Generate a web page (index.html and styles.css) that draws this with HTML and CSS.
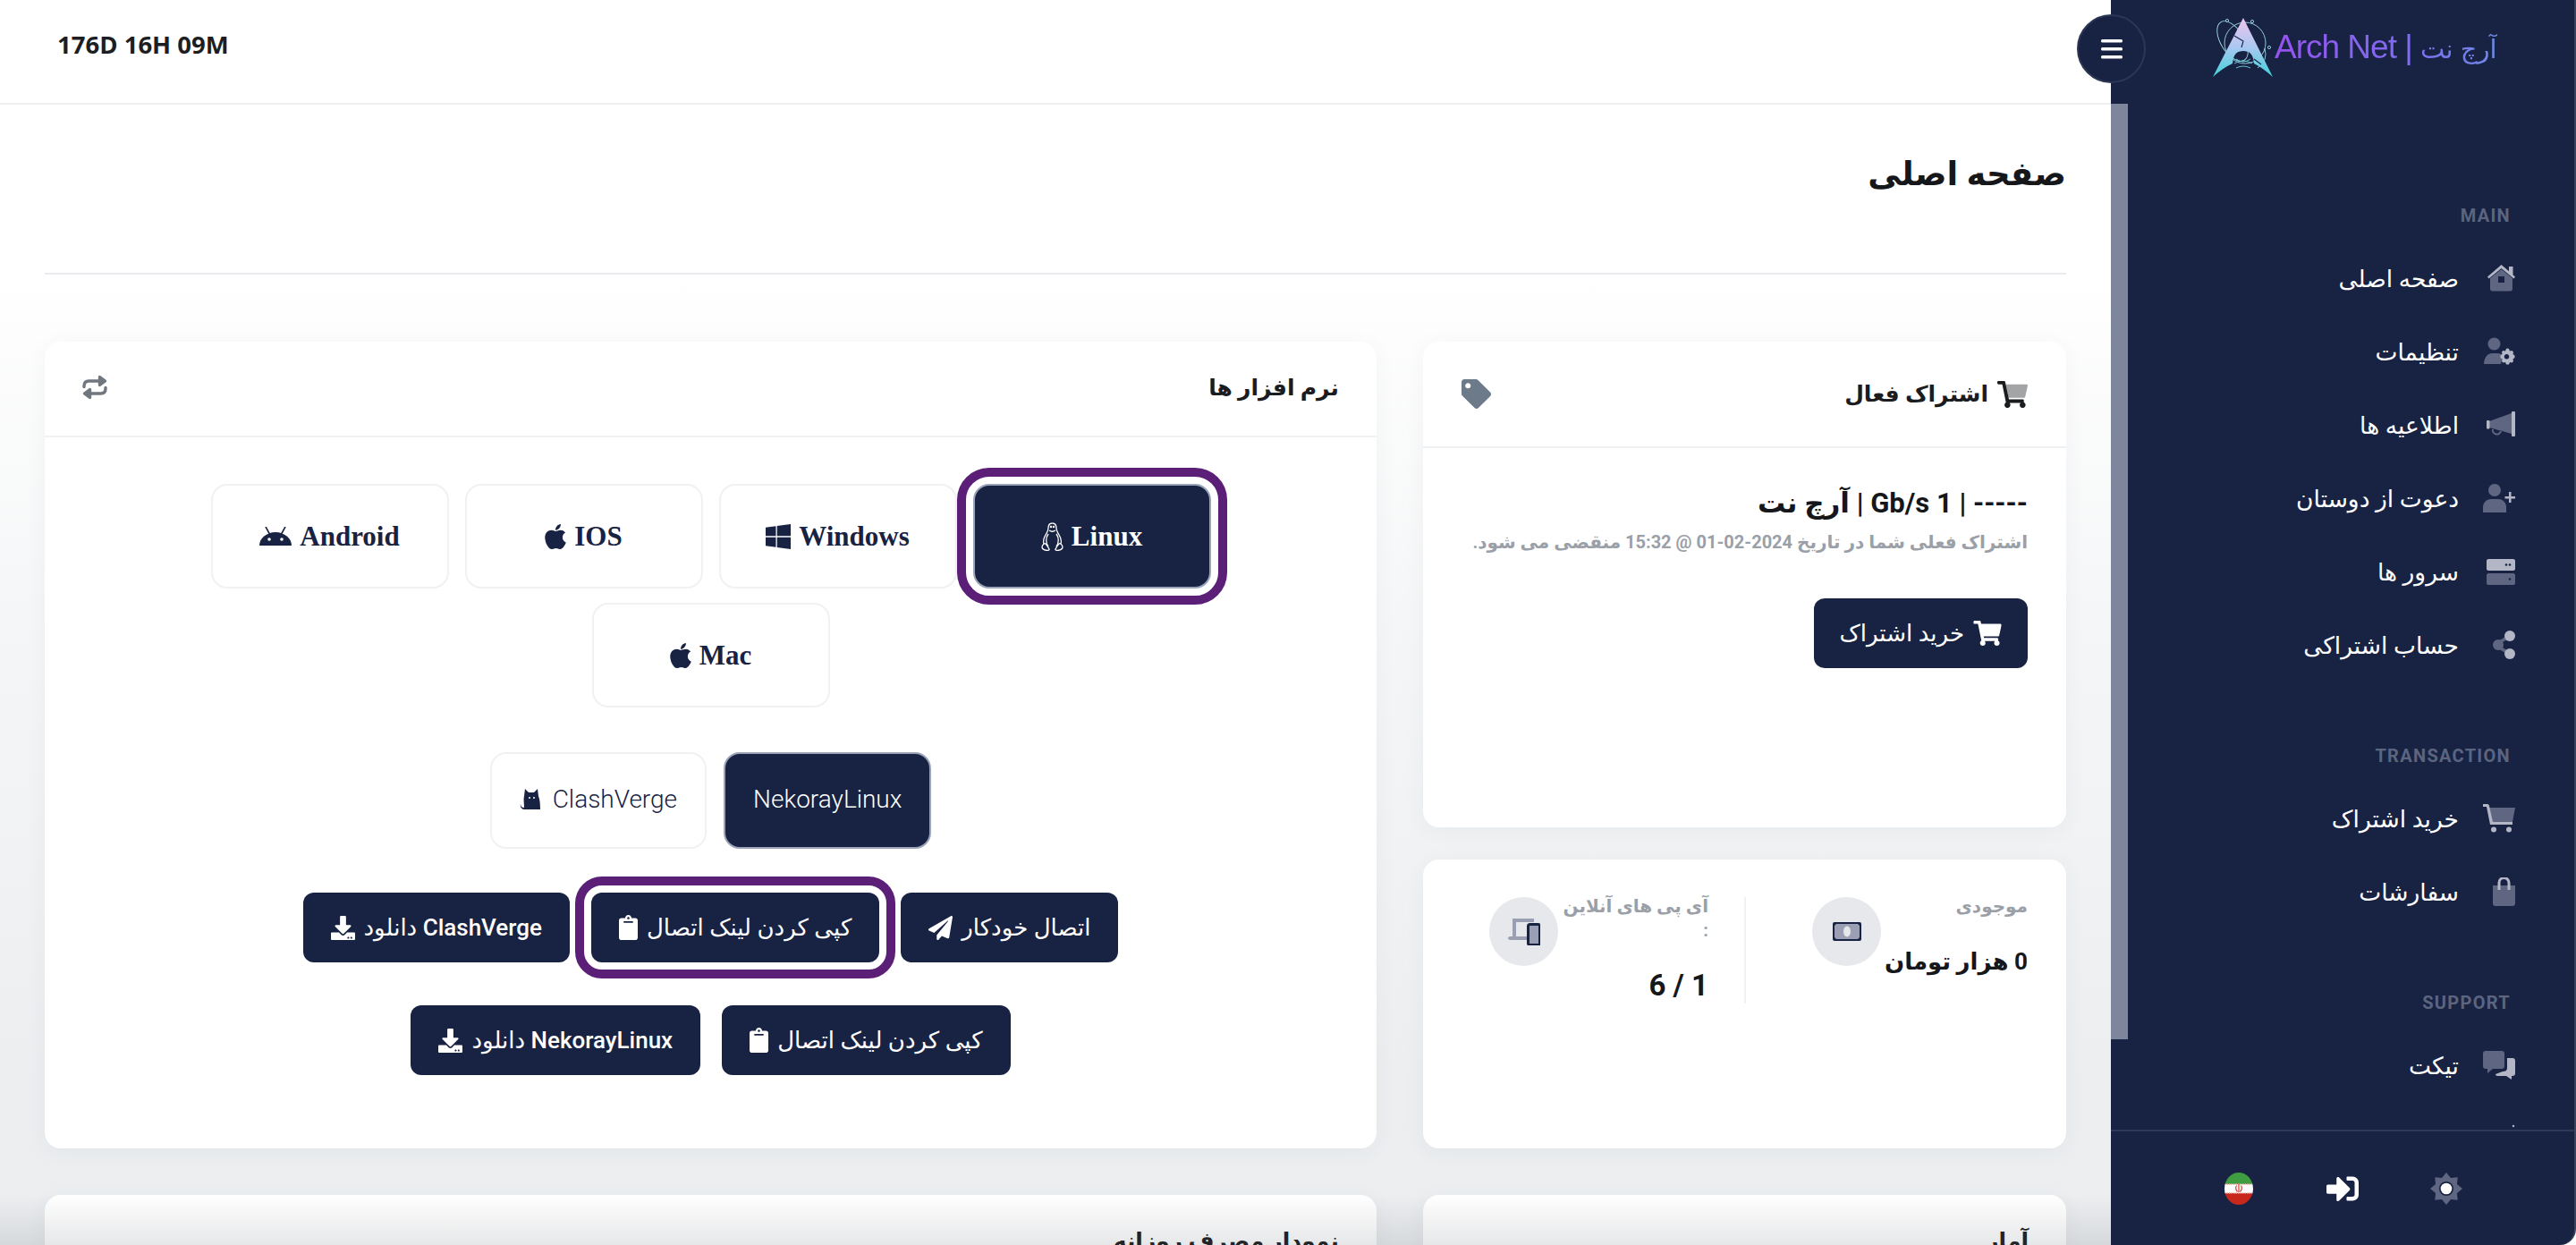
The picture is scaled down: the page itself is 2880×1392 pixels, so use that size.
FILE: index.html
```html
<!DOCTYPE html>
<html lang="fa" dir="rtl">
<head>
  <meta charset="UTF-8">
  <title>Arch Net</title>
  <link rel="stylesheet" href="styles.css">
</head>
<body>
  <svg class="sprite" aria-hidden="true">
    <symbol id="i-cart" viewBox="0 0 576 512"><path d="M528.12 301.319l47.273-208C578.806 78.301 567.391 64 551.99 64H159.208l-9.166-44.81C147.758 8.021 137.93 0 126.529 0H24C10.745 0 0 10.745 0 24v16c0 13.255 10.745 24 24 24h69.883l70.248 343.435C147.325 417.1 136 435.222 136 456c0 30.928 25.072 56 56 56s56-25.072 56-56c0-15.674-6.447-29.835-16.824-40h209.647C430.447 426.165 424 440.326 424 456c0 30.928 25.072 56 56 56s56-25.072 56-56c0-22.172-12.888-41.332-31.579-50.405l5.517-24.276c3.413-15.018-8.002-29.319-23.403-29.319H218.117l-6.545-32h293.145c11.206 0 20.92-7.754 23.403-18.681z"/></symbol>
    <symbol id="i-cart-duo" viewBox="0 0 576 512"><path class="duo-back" d="M159 64h393c15 0 27 14 23 29l-47 208c-3 11-12 19-24 19H212z"/><path d="M24 0h102c12 0 22 8 24 19l71 329h260c15 0 27 14 23 29l-3 29c19 9 35 28 35 50 0 31-25 56-56 56s-56-25-56-56c0-16 6-30 17-40H232c10 10 16 24 16 40 0 31-25 56-56 56s-56-25-56-56c0-21 11-39 28-49L94 64H24C11 64 0 53 0 40V24C0 11 11 0 24 0z"/></symbol>
    <symbol id="i-apple" viewBox="0 0 384 512"><path d="M318.7 268.7c-.2-36.7 16.4-64.4 50-84.8-18.8-26.9-47.2-41.7-84.7-44.6-35.5-2.8-74.3 20.7-88.5 20.7-15 0-49.4-19.7-76.4-19.7C63.3 141.2 4 184.8 4 273.5q0 39.3 14.4 81.2c12.8 36.7 59 126.7 107.2 125.2 25.2-.6 43-17.9 75.8-17.9 31.8 0 48.3 17.9 76.4 17.9 48.6-.7 90.4-82.5 102.6-119.3-65.2-30.7-61.7-90-61.7-91.9zm-56.6-164.2c27.3-32.4 24.8-61.9 24-72.5-24.1 1.4-52 16.4-67.9 34.9-17.5 19.8-27.8 44.3-25.6 71.9 26.1 2 49.9-11.4 69.5-34.3z"/></symbol>
    <symbol id="i-clip" viewBox="0 0 384 512"><path d="M384 112v352c0 26.51-21.49 48-48 48H48c-26.51 0-48-21.49-48-48V112c0-26.51 21.49-48 48-48h80c0-35.29 28.71-64 64-64s64 28.71 64 64h80c26.51 0 48 21.49 48 48zM192 40c-13.255 0-24 10.745-24 24s10.745 24 24 24 24-10.745 24-24-10.745-24-24-24m96 114v-20a6 6 0 0 0-6-6H102a6 6 0 0 0-6 6v20a6 6 0 0 0 6 6h180a6 6 0 0 0 6-6z"/></symbol>
    <symbol id="i-down" viewBox="0 0 512 512"><path d="M216 0h80c13.3 0 24 10.7 24 24v168h87.7c17.8 0 26.7 21.5 14.1 34.1L269.7 378.3c-7.5 7.5-19.8 7.5-27.3 0L90.1 226.1c-12.6-12.6-3.7-34.1 14.1-34.1H192V24c0-13.3 10.7-24 24-24zm296 376v112c0 13.3-10.7 24-24 24H24c-13.3 0-24-10.7-24-24V376c0-13.3 10.7-24 24-24h146.7l49 49c20.1 20.1 52.5 20.1 72.6 0l49-49H488c13.3 0 24 10.7 24 24zm-124 88c0-11-9-20-20-20s-20 9-20 20 9 20 20 20 20-9 20-20zm64 0c0-11-9-20-20-20s-20 9-20 20 9 20 20 20 20-9 20-20z"/></symbol>
  </svg>

  <div class="layout">
    <button class="menu-btn" aria-label="menu">
      <svg viewBox="0 0 24 22" width="24" height="22" fill="#fff"><rect width="24" height="3.600" rx="1.500"/><rect y="9" width="24" height="3.600" rx="1.500"/><rect y="18" width="24" height="3.600" rx="1.500"/></svg>
    </button>

    <aside class="sidebar">
      <div class="logo">
        <svg class="logo-mark" viewBox="0 0 67 66">
          <defs>
            <linearGradient id="archGrad" x1="0" y1="0" x2="0" y2="1">
              <stop offset="0" stop-color="#f0c4ec"/>
              <stop offset="0.5" stop-color="#a9c8f2"/>
              <stop offset="1" stop-color="#3fd2d6"/>
            </linearGradient>
          </defs>
          <g fill="none" stroke="#9fdbe6" stroke-width="0.9">
            <ellipse cx="22" cy="26" rx="13" ry="25" transform="rotate(-32 22 26)"/>
            <circle cx="36" cy="28" r="23"/>
            <path d="M58 34q4 14-8 22"/>
            <circle cx="16" cy="3" r="1.6"/>
            <circle cx="44" cy="4" r="1.6"/>
            <circle cx="63" cy="33" r="1.6"/>
          </g>
          <path fill="url(#archGrad)" d="M34 0L67 66Q56 56 46 51C45 40 41 37 34 37C27 37 23 40 22 51Q11 56 0 66Z"/>
          <path fill="none" stroke="#182343" stroke-width="1.1" d="M24 20l10 6-2 7M46 46l8 6"/>
          <g fill="none" stroke="#6fcfdc" stroke-width="0.9">
            <path d="M26 46q8 6 16 0M24 51q10-6 20 0M26 56q8-4 16 0"/>
          </g>
        </svg>
        <span class="logo-text" dir="ltr">Arch Net | <span class="logo-fa">آرچ نت</span></span>
      </div>

      <nav class="nav">
        <div class="nav-thumb"></div>
        <div class="nav-title">MAIN</div>
        <a class="nav-item">
          <svg class="nav-icon" viewBox="0 0 36 32"><path class="d1" d="M20.500 6L33 16v12c0 1.500-1 2.500-2.500 2.500h-20C9 30.500 8 29.500 8 28V16z"/><path class="d2" d="M5 14.500L20.500 1l8.500 7.300V3h4.500v9.200L36 14.500l-1.500 2L20.500 5 6.500 16.500z"/><rect class="hole" x="17" y="14" width="7" height="7"/></svg>
          <span>صفحه اصلی</span>
        </a>
        <a class="nav-item">
          <svg class="nav-icon" viewBox="0 0 36 32"><circle class="d1" cx="12.500" cy="7.500" r="7"/><path class="d1" d="M1 30c0-7 4-12 9-12h6c3 0 5 1 6 2l-2 10z"/><path class="d2" d="M27 12.500l2 .5 1 2.500 2.500-.5 1.500 1.500-.5 2.500 2 1.500v2.500l-2 1.500.5 2.500-1.500 1.500-2.500-.5-1 2.500h-3l-1-2.500-2.500.5-1.500-1.500.5-2.500-2-1.500V20.500l2-1.500-.5-2.500 1.500-1.500 2.500.5 1-2.500zM26.500 19a2.800 2.800 0 1 0 .001 0z" fill-rule="evenodd"/></svg>
          <span>تنظیمات</span>
        </a>
        <a class="nav-item">
          <svg class="nav-icon" viewBox="0 0 36 32"><path class="d1" d="M7 12L32 3v23L7 19z"/><rect class="d2" x="32" y="1" width="4" height="28" rx="1"/><rect class="d2" x="4" y="11" width="3.500" height="9.500" rx="1"/><path d="M11 21a4.500 4.500 0 0 0 9 2" fill="none" stroke="#5e6681" stroke-width="2"/></svg>
          <span>اطلاعیه ها</span>
        </a>
        <a class="nav-item">
          <svg class="nav-icon" viewBox="0 0 36 32"><circle class="d1" cx="13" cy="7" r="7"/><path class="d1" d="M0 32v-6c0-5 4-9 9-9h8c5 0 9 4 9 9v6z"/><path class="d2" d="M29 9h2.500v5H36v2.500h-4.500V21H29v-4.500h-4.500V14H29z"/></svg>
          <span>دعوت از دوستان</span>
        </a>
        <a class="nav-item">
          <svg class="nav-icon" viewBox="0 0 36 32"><path class="d2" d="M6 2h28c1 0 2 1 2 2v9c0 1-1 2-2 2H6c-1 0-2-1-2-2V4c0-1 1-2 2-2z"/><path class="d1" d="M6 18h28c1 0 2 1 2 2v9c0 1-1 2-2 2H6c-1 0-2-1-2-2v-9c0-1 1-2 2-2z"/><circle class="hole" cx="30" cy="8.500" r="1.300"/><circle class="hole" cx="26" cy="8.500" r="1.300"/><circle class="hole" cx="30" cy="24.500" r="1.300"/></svg>
          <span>سرور ها</span>
        </a>
        <a class="nav-item">
          <svg class="nav-icon" viewBox="0 0 36 32"><path class="d1" d="M15 13l13-8 2 3-13 8zM17 16l13 8-2 3-13-8z"/><circle class="d1" cx="17" cy="16" r="6"/><circle class="d2" cx="30" cy="6" r="6"/><circle class="d2" cx="30" cy="26" r="6"/></svg>
          <span>حساب اشتراکی</span>
        </a>

        <div class="nav-title">TRANSACTION</div>
        <a class="nav-item">
          <svg class="nav-icon" viewBox="0 0 36 32"><path class="d1" d="M7 4h29l-3 16H10z"/><path class="d2" d="M0 0h5c1 0 2 1 2 2l4 18h22v3H8L4 3H0z"/><circle class="d2" cx="12" cy="28.500" r="3"/><circle class="d2" cx="29" cy="28.500" r="3"/></svg>
          <span>خرید اشتراک</span>
        </a>
        <a class="nav-item">
          <svg class="nav-icon" viewBox="0 0 36 32"><path class="d1" d="M11 9h25v20c0 2-1 3-3 3H14c-2 0-3-1-3-3z"/><path class="d2-line" d="M18 14V6a5.500 5.500 0 0 1 11 0v8"/></svg>
          <span>سفارشات</span>
        </a>

        <div class="nav-title">SUPPORT</div>
        <a class="nav-item">
          <svg class="nav-icon" viewBox="0 0 36 32"><path class="d1" d="M3 0h18c2 0 3 1 3 3v14c0 2-1 3-3 3H11l-6 5v-5H3c-2 0-3-1-3-3V3c0-2 1-3 3-3z"/><path class="d2" d="M27 8h6c2 0 3 1 3 3v14c0 2-1 3-3 3h-1v4l-6-4h-10c-1 0-2-1-2-2l8-3c3 0 5-1 5-4z"/></svg>
          <span>تیکت</span>
        </a>
        <a class="nav-item">
          <svg class="nav-icon" viewBox="0 0 36 32"><circle class="d2" cx="34" cy="2" r="1.200"/><rect class="d1" x="6" y="7" width="30" height="25" rx="3"/></svg>
          <span>قوانین</span>
        </a>
      </nav>

      <div class="side-foot">
        <svg class="foot-icon" viewBox="-18 -18 36 36"><polygon class="d1" points="0,-18 5,-12 12.700,-12.700 12,-5 18,0 12,5 12.700,12.700 5,12 0,18 -5,12 -12.700,12.700 -12,5 -18,0 -12,-5 -12.700,-12.700 -5,-12"/><circle cx="0" cy="0" r="8" fill="#182343"/><circle cx="0" cy="0" r="6.300" fill="#fff"/></svg>
        <svg class="foot-icon" viewBox="0 0 512 512" fill="#fff"><path d="M416 448h-84c-6.600 0-12-5.400-12-12v-40c0-6.600 5.400-12 12-12h84c17.700 0 32-14.300 32-32V160c0-17.700-14.300-32-32-32h-84c-6.600 0-12-5.400-12-12V76c0-6.600 5.400-12 12-12h84c53 0 96 43 96 96v192c0 53-43 96-96 96zm-47-201L201 79c-15-15-41-4.500-41 17v96H24c-13.300 0-24 10.700-24 24v96c0 13.300 10.700 24 24 24h136v96c0 21.500 26 32 41 17l168-168c9.300-9.400 9.300-24.600 0-34z"/></svg>
        <svg class="foot-icon" viewBox="0 0 36 36">
          <defs><clipPath id="flagClip"><ellipse cx="18" cy="18" rx="16" ry="18"/></clipPath></defs>
          <g clip-path="url(#flagClip)">
            <rect width="36" height="13" fill="#3f9c41"/>
            <rect y="13" width="36" height="10" fill="#fff"/>
            <rect y="23" width="36" height="13" fill="#c8281c"/>
            <path d="M2 13h32M2 23h32" stroke="#e9a6a0" stroke-width="1.500" stroke-dasharray="1.500 1"/>
            <path d="M18 13v9M15.500 14.500q-2 3.500 1 7M20.500 14.500q2 3.500-1 7" fill="none" stroke="#d03a30" stroke-width="1.200"/>
          </g>
        </svg>
      </div>
    </aside>

    <main class="main">
      <header class="topbar"><div class="uptime" dir="ltr">176D 16H 09M</div></header>

      <div class="page-head"><h1>صفحه اصلی</h1></div>

      <div class="grid">
        <div class="col-side">
          <section class="card card-sub">
            <div class="card-head head-tall">
              <h3 class="card-title"><svg class="title-cart" viewBox="0 0 576 512"><use href="#i-cart-duo"/></svg> اشتراک فعال</h3>
              <svg class="tag" viewBox="0 0 512 512"><path d="M0 252.118V48C0 21.490 21.490 0 48 0h204.118a48 48 0 0 1 33.941 14.059l211.882 211.882c18.745 18.745 18.745 49.137 0 67.882L293.823 497.941c-18.745 18.745-49.137 18.745-67.882 0L14.059 286.059A48 48 0 0 1 0 252.118zM112 64c-26.510 0-48 21.490-48 48s21.490 48 48 48 48-21.490 48-48-21.490-48-48-48z"/></svg>
            </div>
            <div class="sub-body">
              <div class="plan">----- | 1 Gb/s | آرچ نت</div>
              <div class="muted sub-note">اشتراک فعلی شما در تاریخ 2024-02-01 @ 15:32 منقضی می شود.</div>
              <a class="btn btn-buy"><svg class="btn-icon cart" viewBox="0 0 576 512"><use href="#i-cart"/></svg> خرید اشتراک</a>
            </div>
          </section>

          <section class="card card-stats">
            <div class="stat stat-first">
              <div class="stat-text">
                <div class="muted">موجودی</div>
                <div class="stat-value">0 هزار تومان</div>
              </div>
              <div class="stat-circle">
                <svg width="32" height="21" viewBox="0 0 32 21"><rect width="32" height="21" rx="2" fill="#182343"/><path d="M4 2h24l2 2v13l-2 2H4l-2-2V4z" fill="#9a9fb4"/><ellipse cx="16" cy="10.500" rx="4" ry="6" fill="#e6e7ea"/></svg>
              </div>
            </div>
            <div class="stat">
              <div class="stat-text">
                <div class="muted">آی پی های آنلاین<br>:</div>
                <div class="stat-value stat-num">1 / 6</div>
              </div>
              <div class="stat-circle">
                <svg width="36" height="30" viewBox="0 0 36 30"><path d="M5 0h24v4H9v16h12v4H3c-2 0-3-1-3-2s1-2 2-2h3z" fill="#9a9fb4"/><rect x="22.500" y="6.500" width="13" height="23" rx="2" fill="#9a9fb4" stroke="#182343" stroke-width="3"/></svg>
              </div>
            </div>
          </section>
        </div>

        <section class="card card-apps">
          <div class="card-head">
            <h3 class="card-title">نرم افزار ها</h3>
            <svg class="refresh" viewBox="0 0 28 28" fill="none" stroke="#70777f" stroke-width="3.400" stroke-linecap="round" stroke-linejoin="round"><path d="M2 13.500v-1C2 9 4 7 7.500 7H21"/><path d="M26 14.500v1c0 3.500-2 5.500-5.500 5.500H7"/><path d="M19.500 2.500L25.500 7l-6 4.500zM8.500 16.500L2.500 21l6 4.500z" fill="#70777f"/></svg>
          </div>
          <div class="apps-body">
            <div class="tabs os-tabs">
              <a class="tab os-tab active ring">
                <svg class="tux" viewBox="0 0 25 32" fill="none" stroke="#fff" stroke-width="1.300"><path d="M12.500 1c3 0 4.500 2.500 4.500 5.500 0 3 1 4 3 7.500s3 7 2 10"/><path d="M12.500 1c-3 0-4.500 2.500-4.500 5.500 0 3-1 4-3 7.500s-3 7-2 10"/><path d="M9 9q3.500 2.500 7 0M8 13c-3 4-3 10 0 14M17 13c3 4 3 10 0 14"/><path d="M1 28c0-3 3-5 4-4s3 4 4 6-7 2-8-2zM24 28c0-3-3-5-4-4s-3 4-4 6 7 2 8-2z" fill="#182343"/><circle cx="11" cy="5" r=".6" fill="#fff"/><circle cx="14" cy="5" r=".6" fill="#fff"/></svg>
                Linux
              </a>
              <a class="tab os-tab">
                <svg class="os-icon" viewBox="0 0 448 512" width="28" height="32"><path d="M0 93.700l183.600-25.300v177.400H0V93.700zm0 324.600l183.600 25.300V268.400H0v149.900zm203.800 28L448 480V268.400H203.800v177.900zm0-380.600v180.100H448V32L203.800 65.700z"/></svg>
                Windows
              </a>
              <a class="tab os-tab"><svg class="os-icon" viewBox="0 0 384 512" width="24" height="32"><use href="#i-apple"/></svg> IOS</a>
              <a class="tab os-tab">
                <svg class="os-icon" viewBox="0 0 36 21" width="36" height="21"><path d="M0 21a18 15 0 0 1 36 0z"/><path d="M7 0l5 9M29 0l-5 9" stroke="#182343" stroke-width="1.600"/><circle cx="11" cy="14" r="1.800" fill="#fff"/><circle cx="25" cy="14" r="1.800" fill="#fff"/></svg>
                Android
              </a>
              <a class="tab os-tab"><svg class="os-icon" viewBox="0 0 384 512" width="24" height="32"><use href="#i-apple"/></svg> Mac</a>
            </div>

            <div class="tabs app-tabs">
              <a class="tab app-tab active">NekorayLinux</a>
              <a class="tab app-tab">
                <svg class="os-icon" viewBox="0 0 25 23" width="25" height="23"><path d="M6 0l4 4h6l4-4 1 8c1 3 2 6 2 15H6C3 23 0 21 1 17c0 3 2 4 4 4 0-5-1-9 0-13z"/><circle cx="11" cy="10" r="1" fill="#fff"/><circle cx="16" cy="10" r="1" fill="#fff"/></svg>
                ClashVerge
              </a>
            </div>

            <div class="actions">
              <a class="btn">اتصال خودکار <svg class="btn-icon" viewBox="0 0 512 512"><path d="M476 3.200L12.500 270.600c-18.100 10.400-15.800 35.600 2.200 43.200L121 358.400l287.300-253.200c5.500-4.900 13.300 2.600 8.600 8.300L176 407v80.500c0 23.600 28.500 32.900 42.500 15.800L282 426l124.600 52.200c14.200 6 30.400-2.900 33-18.200l72-432C515 7.800 493.300-6.800 476 3.200z"/></svg></a>
              <a class="btn ring">کپی کردن لینک اتصال <svg class="btn-icon clip" viewBox="0 0 384 512"><use href="#i-clip"/></svg></a>
              <a class="btn">ClashVerge دانلود <svg class="btn-icon" viewBox="0 0 512 512"><use href="#i-down"/></svg></a>
            </div>
            <div class="actions actions-2">
              <a class="btn">کپی کردن لینک اتصال <svg class="btn-icon clip" viewBox="0 0 384 512"><use href="#i-clip"/></svg></a>
              <a class="btn">NekorayLinux دانلود <svg class="btn-icon" viewBox="0 0 512 512"><use href="#i-down"/></svg></a>
            </div>
          </div>
        </section>

        <section class="card"><div class="card-head"><h3 class="card-title">آمار</h3></div></section>
        <section class="card"><div class="card-head"><h3 class="card-title">نمودار مصرف روزانه</h3></div></section>
      </div>

      <div class="bottom-fade"></div>
    </main>
  </div>
</body>
</html>
```

FILE: styles.css
```css
* {
  box-sizing: border-box;
}
html, body {
  margin: 0;
  height: 100%;
  overflow: hidden;
}
body {
  font-family: Roboto, "DejaVu Sans", sans-serif;
  color: #1a1c20;
  background: #fff;
}
.sprite {
  display: none;
}
.layout {
  position: relative;
  display: flex;
  height: 1392px;
}
.menu-btn {
  position: absolute;
  top: 16px;
  left: 2322px;
  width: 77px;
  height: 77px;
  padding: 0;
  display: flex;
  align-items: center;
  justify-content: center;
  border-radius: 50%;
  border: 2px solid #2c3655;
  background: #182343;
  z-index: 3;
}

/* sidebar */
.sidebar {
  width: 520px;
  flex: none;
  display: flex;
  flex-direction: column;
  background: #182343;
  border-right: 2px solid #3b435c;
  border-bottom-right-radius: 18px;
}
.logo {
  height: 116px;
  flex: none;
  display: flex;
  align-items: flex-start;
  direction: ltr;
  padding: 20px 0 0 114px;
}
.logo-mark {
  width: 67px;
  height: 66px;
  flex: none;
}
.logo-text {
  margin: 9px 0 0 2px;
  font-family: "Liberation Sans", "DejaVu Sans", sans-serif;
  font-size: 37px;
  line-height: 48px;
  letter-spacing: -1px;
  white-space: nowrap;
  background: linear-gradient(90deg, #9553ee 0%, #7f6cf0 60%, #6d8be6 100%);
  -webkit-background-clip: text;
  background-clip: text;
  color: transparent;
}
.logo-fa {
  font-size: 29px;
  letter-spacing: 0;
}
.nav {
  flex: 1;
  position: relative;
  overflow: hidden;
  padding: 42px 0 0;
}
.nav-thumb {
  position: absolute;
  left: 0;
  top: 0;
  width: 19px;
  height: 1046px;
  background: #7e869e;
}
.nav-title {
  margin: 69px 71px 15px 0;
  height: 28px;
  line-height: 28px;
  font-size: 20px;
  font-weight: 700;
  letter-spacing: 1.300px;
  color: #5c6580;
  direction: ltr;
  text-align: right;
}
.nav-item {
  display: flex;
  align-items: center;
  height: 82px;
  gap: 27px;
  padding-right: 66px;
  color: #fff;
  font-size: 26.500px;
}
.nav-icon {
  width: 36px;
  height: 32px;
  flex: none;
}
.d1 { fill: #5e6681; }
.d2 { fill: #b2b6c5; }
.d2-line {
  fill: none;
  stroke: #b2b6c5;
  stroke-width: 3;
}
.hole { fill: #182343; }
.side-foot {
  height: 129px;
  flex: none;
  display: flex;
  align-items: center;
  justify-content: center;
  gap: 80px;
  border-top: 2px solid #2e3857;
}
.foot-icon {
  width: 36px;
  height: 36px;
}

/* main */
.main {
  flex: 1;
  min-width: 0;
  position: relative;
  height: 1392px;
  overflow: hidden;
  background: linear-gradient(180deg, #fff 0, #fff 300px, #f5f6f7 700px, #eceef0 1200px);
}
.topbar {
  height: 117px;
  display: flex;
  justify-content: flex-end;
  padding: 0 0 16px 64px;
  align-items: center;
  background: #fff;
  border-bottom: 2px solid #eeeff1;
}
.uptime {
  font-family: "Open Sans", sans-serif;
  font-weight: 700;
  font-size: 27.500px;
  color: #1c1e22;
}
.page-head {
  height: 190px;
  margin: 0 50px;
  padding-top: 50px;
  border-bottom: 2px solid #e9ebee;
}
.page-head h1 {
  margin: 0;
  font-size: 37px;
  line-height: 56px;
  font-weight: 700;
  color: #15171b;
}
.grid {
  display: grid;
  grid-template-columns: 719px 1489px;
  gap: 52px;
  margin: 75px 50px 0;
}
.col-side {
  display: flex;
  flex-direction: column;
  gap: 36px;
}
.card {
  background: #fff;
  border-radius: 18px;
  box-shadow: 0 4px 24px rgba(60, 70, 90, .05);
}
.card-head {
  height: 107px;
  display: flex;
  align-items: center;
  justify-content: space-between;
  padding: 0 42px 3px;
  border-bottom: 2px solid #f0f1f3;
}
.head-tall {
  height: 119px;
  padding: 0 43px;
}
.card-title {
  margin: 0;
  font-size: 25px;
  font-weight: 700;
  color: #1a1c20;
  display: flex;
  align-items: center;
  gap: 10px;
}
.title-cart {
  width: 34px;
  height: 32px;
  fill: #1a1c20;
}
.duo-back { opacity: .4; }
.tag {
  width: 33px;
  height: 33px;
  fill: #6c7a8a;
}
.refresh {
  width: 28px;
  height: 28px;
}
.card-sub {
  height: 543px;
}
.sub-body {
  padding: 40px 43px 0;
}
.plan {
  font-size: 31px;
  font-weight: 700;
  line-height: 44px;
  color: #15171b;
}
.muted {
  font-size: 20px;
  font-weight: 700;
  line-height: 27px;
  color: #9a9fa8;
}
.sub-note {
  margin-top: 8px;
  white-space: nowrap;
}
.btn {
  display: inline-flex;
  align-items: center;
  gap: 10px;
  height: 78px;
  padding: 0 31px;
  border-radius: 12px;
  background: #182343;
  color: #fff;
  font-size: 26px;
  font-weight: 500;
  white-space: nowrap;
}
.btn-buy {
  margin-top: 49px;
  padding: 0 29px;
}
.btn-icon {
  width: 27px;
  height: 27px;
  fill: #fff;
  flex: none;
}
.btn-icon.cart {
  width: 32px;
  height: 28px;
}
.btn-icon.clip {
  width: 21px;
  height: 28px;
}
.card-stats {
  flex: 1;
  display: grid;
  grid-template-columns: 360px 1fr;
  padding-top: 42px;
  height: 323px;
}
.stat {
  display: flex;
  height: 119px;
  justify-content: space-between;
  padding: 0 40px 0 74px;
}
.stat-first {
  border-left: 2px solid #f0f1f3;
  padding-right: 43px;
}
.stat-text {
  margin-top: -3px;
  min-width: 0;
}
.stat-value {
  margin-top: 28px;
  font-size: 26px;
  font-weight: 700;
  line-height: 40px;
  color: #15171b;
  white-space: nowrap;
}
.stat-num {
  font-size: 33px;
}
.stat-circle {
  width: 77px;
  height: 77px;
  flex: none;
  display: flex;
  align-items: center;
  justify-content: center;
  border-radius: 50%;
  background: #e7e8eb;
}
.apps-body {
  padding: 52px 60px 82px;
}
.tabs {
  display: flex;
  flex-wrap: wrap;
  justify-content: center;
}
.tab {
  display: flex;
  align-items: center;
  justify-content: center;
  direction: ltr;
  border-radius: 18px;
  background: #fff;
  border: 2px solid #f0f1f3;
  color: #182343;
}
.tab.active {
  background: #182343;
  color: #fff;
  border-color: #9aa3b8;
}
.os-tabs {
  gap: 16px 18px;
}
.os-tab {
  width: 266px;
  height: 117px;
  gap: 9px;
  font-family: "Liberation Serif", serif;
  font-weight: 700;
  font-size: 31px;
}
.os-icon {
  fill: currentColor;
  flex: none;
}
.tux {
  width: 25px;
  height: 32px;
}
.app-tabs {
  gap: 19px;
  margin-top: 50px;
}
.app-tab {
  height: 108px;
  padding: 0 31px 3px;
  gap: 12px;
  font-size: 28px;
  font-weight: 300;
}
.ring {
  outline: 10px solid #5b1f78;
  outline-offset: 8px;
}
.actions {
  display: flex;
  justify-content: center;
  gap: 24px;
  margin-top: 49px;
}
.actions-2 {
  margin-top: 48px;
}
.bottom-fade {
  position: absolute;
  left: 0;
  right: 0;
  bottom: 0;
  height: 56px;
  background: linear-gradient(180deg, rgba(80, 85, 95, 0), rgba(80, 85, 95, .14));
}
```
